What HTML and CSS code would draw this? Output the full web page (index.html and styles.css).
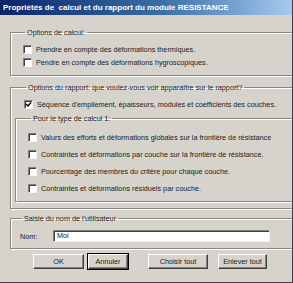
FILE: index.html
```html
<!DOCTYPE html>
<html lang="fr">
<head>
    <meta charset="UTF-8">
    <title>Propriétés de calcul et du rapport du module RESISTANCE</title>
    <link rel="stylesheet" href="styles.css">
</head>
<body>
    <div class="window">
        <div class="titlebar">Propriétés de  calcul et du rapport du module RESISTANCE</div>

        <div class="dialog">
            <fieldset class="group group-calc">
                <legend>Options de calcul:</legend>
                <label class="check-row"><span class="checkbox"></span>Prendre en compte des déformations thermiques.</label>
                <label class="check-row"><span class="checkbox"></span>Pendre en compte des déformations hygroscopiques.</label>
            </fieldset>

            <fieldset class="group group-report">
                <legend>Options du rapport: que voulez-vous voir apparaître sur le rapport?</legend>
                <label class="check-row">
                    <span class="checkbox checked">
                        <svg viewBox="0 0 7 7" width="7" height="7"><path d="M1 3 L3 5 L6 1.5" fill="none" stroke="#000" stroke-width="1.4"/></svg>
                    </span>Séquence d'empilement, épaisseurs, modules et coefficients des couches.
                </label>

                <fieldset class="group group-inner">
                    <legend>Pour le type de calcul 1:</legend>
                    <label class="check-row tall"><span class="checkbox"></span>Valurs des efforts et déformations globales sur la frontière de résistance</label>
                    <label class="check-row tall"><span class="checkbox"></span>Contraintes et déformations par couche sur la frontière de résistance.</label>
                    <label class="check-row tall"><span class="checkbox"></span>Pourcentage des membres du critère pour chaque couche.</label>
                    <label class="check-row tall"><span class="checkbox"></span>Contraintes et déformations résiduels par couche.</label>
                </fieldset>
            </fieldset>

            <fieldset class="group group-user">
                <legend>Saisie du nom de l'utilisateur</legend>
                <div class="name-row">
                    <span class="name-label">Nom:</span>
                    <div class="textbox">Moi</div>
                </div>
            </fieldset>

            <div class="buttons">
                <button class="btn btn-ok">OK</button>
                <button class="btn btn-cancel default">Annuler</button>
                <button class="btn btn-all">Choisir tout</button>
                <button class="btn btn-none">Enlever tout</button>
            </div>
        </div>
    </div>
</body>
</html>
```

FILE: styles.css
```css
body {
    margin: 0;
    background: #fff;
    font-family: "Liberation Sans", Arial, sans-serif;
}
.window {
    width: 292px;
    height: 282px;
    background: #d6d3cc;
    border-right: 1px solid #404040;
    border-bottom: 1px solid #404040;
    color: #1a1a1a;
    font-size: 7.25px;
    overflow: hidden;
}
.titlebar {
    height: 15px;
    line-height: 15px;
    padding-left: 3px;
    background: linear-gradient(to right, #0a246a 0%, #3a6ea5 55%, #a6caf0 100%);
    color: #fff;
    font-weight: bold;
    font-size: 8px;
    white-space: pre;
}
.dialog {
    padding: 13px 5px 0 10px;
}
.group {
    margin: 0;
    border: 1px solid #8a8780;
    box-shadow: inset 1px 1px #fff, 1px 1px #fff;
    padding: 0;
    min-width: 0;
}
.group legend {
    padding: 0 2px;
    margin-left: 2px;
    line-height: 9px;
}
.group-calc {
    width: 276px;
    padding: 6px 0 6px 12px;
}
.group-report {
    width: 279px;
    margin-top: 7px;
    padding: 6px 0 6px 13px;
}
.group-inner {
    width: 265px;
    margin: 3px 0 0 -9px;
    padding: 6px 0 4px 12px;
}
.group-inner legend {
    margin-left: 3px;
}
.group-user {
    width: 276px;
    margin-top: 5px;
    padding: 7px 0 6px 9px;
}
.check-row {
    display: flex;
    align-items: center;
    height: 13px;
    white-space: nowrap;
}
.check-row.tall {
    height: 17px;
}
.checkbox {
    display: flex;
    align-items: center;
    justify-content: center;
    box-sizing: border-box;
    width: 9px;
    height: 9px;
    margin-right: 4px;
    background: #fff;
    border-top: 1px solid #808080;
    border-left: 1px solid #808080;
    border-right: 1px solid #f4f4f4;
    border-bottom: 1px solid #f4f4f4;
    box-shadow: inset 1px 1px #404040;
    flex-shrink: 0;
}
.name-row {
    display: flex;
    align-items: center;
    height: 12px;
}
.name-label {
    width: 33px;
}
.textbox {
    box-sizing: border-box;
    width: 217px;
    height: 12px;
    line-height: 10px;
    padding-left: 3px;
    background: #fff;
    border-top: 1px solid #808080;
    border-left: 1px solid #808080;
    border-right: 1px solid #f4f4f4;
    border-bottom: 1px solid #f4f4f4;
    box-shadow: inset 1px 1px #404040;
}
.buttons {
    display: flex;
    margin-top: 5px;
}
.btn {
    height: 15px;
    padding: 0;
    font: inherit;
    color: inherit;
    background: #d6d3cc;
    border: 1px solid;
    border-color: #fff #404040 #404040 #fff;
    box-shadow: inset -1px -1px #808080;
}
.btn.default {
    outline: 1px solid #000;
}
.btn-ok {
    width: 51px;
    margin-left: 23px;
}
.btn-cancel {
    width: 40px;
    margin-left: 4px;
}
.btn-all {
    width: 60px;
    margin-left: 20px;
}
.btn-none {
    width: 49px;
    margin-left: 10px;
}
```
